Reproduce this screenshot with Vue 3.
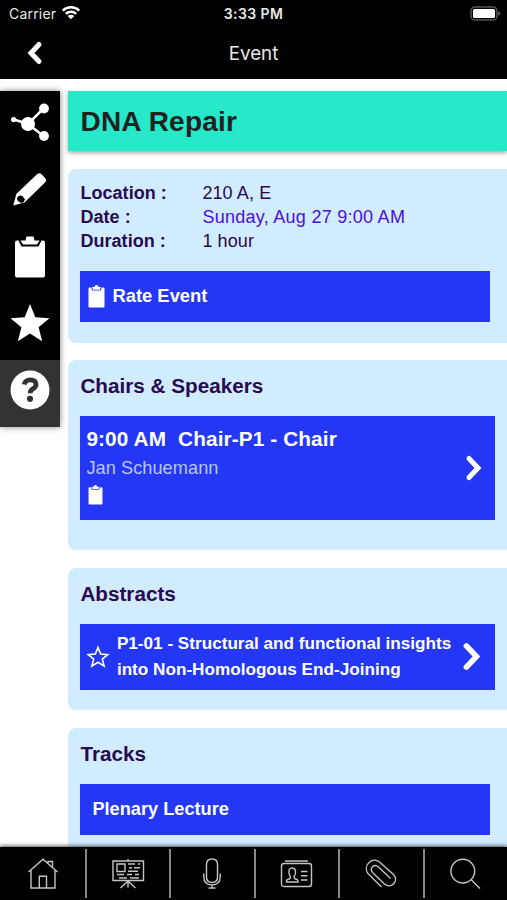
<template>
  <div class="app">
    <header class="header">
      <div class="status-bar">
        <div class="carrier">
          <span>Carrier</span>
          <svg class="wifi" viewBox="0 0 20 15">
            <path d="M1.800 5.600a11.700 11.700 0 0 1 16.400 0M4.800 8.800a7.400 7.400 0 0 1 10.400 0" />
            <path class="wifi-dot" d="M10 14.200 6.700 11a4.700 4.700 0 0 1 6.600 0z" />
          </svg>
        </div>
        <span class="time">3:33 PM</span>
        <svg class="battery" viewBox="0 0 32 16">
          <rect class="battery-case" x="1" y="1" width="26" height="13" rx="4" />
          <rect class="battery-level" x="3" y="3" width="22" height="9" rx="1.5" />
          <path class="battery-tip" d="M28.300 5.200q2 .8 2 2.300t-2 2.300z" />
        </svg>
      </div>
      <div class="nav-bar">
        <svg class="back" viewBox="0 0 16 24"><path d="M12 3.500 4 12l8 8.500" /></svg>
        <h1>Event</h1>
      </div>
    </header>

    <div class="body">
      <nav class="side-menu">
        <button class="side-btn share">
          <svg viewBox="0 0 40 40">
            <path class="link" d="M4 14.500 18 19 33.500 3.500M18 19l15.500 12" />
            <circle cx="3.600" cy="14.500" r="2.600" />
            <circle cx="18" cy="19" r="7" />
            <circle cx="34" cy="3.500" r="4.900" />
            <circle cx="34" cy="31" r="4.900" />
          </svg>
        </button>
        <button class="side-btn">
          <svg viewBox="0 0 40 40">
            <path d="M3.300 36.500 6.300 25 27 5.300q2.300-2.100 4.500 0l3.500 3.700q2.200 2.300 0 4.500L14.500 33.500z" />
            <path class="pencil-cut" d="M8 27.500q2.500-1.800 4.500-.3l2.500 3q-.5 3-3.500 3.800-4-1.500-4.700-4.500z" />
          </svg>
        </button>
        <button class="side-btn">
          <svg viewBox="0 0 40 40"><path :d="bigClipboard" /></svg>
        </button>
        <button class="side-btn">
          <svg viewBox="0 0 40 40"><path :d="star" /></svg>
        </button>
        <button class="side-btn active">
          <svg viewBox="0 0 40 40">
            <circle cx="20" cy="20" r="19.500" />
            <path class="question" d="M14.200 14.500q1-4.700 6-4.700 5.800 0 5.800 4.700 0 2.600-3.200 4.400-2.600 1.500-2.600 4.300" />
            <circle class="question-dot" cx="20" cy="28.800" r="3.100" />
          </svg>
        </button>
      </nav>

      <main class="content">
        <h2 class="title">DNA Repair</h2>

        <section class="card details">
          <dl>
            <template v-for="row in details" :key="row.label">
              <dt>{{ row.label }} :</dt>
              <dd :class="{ date: row.isDate }">{{ row.value }}</dd>
            </template>
          </dl>
          <button class="item rate">
            <svg class="clipboard" viewBox="0 0 17 23"><path :d="clipboard" /></svg>
            <span>Rate Event</span>
          </button>
        </section>

        <section class="card chairs">
          <h3>Chairs &amp; Speakers</h3>
          <div class="item speaker">
            <div class="speaker-info">
              <div class="role"><span>9:00 AM</span><span>Chair-P1 - Chair</span></div>
              <div class="name">Jan Schuemann</div>
              <svg class="clipboard small" viewBox="0 0 17 23"><path :d="clipboard" /></svg>
            </div>
            <svg class="chevron" viewBox="0 0 16 26"><path d="M3 3.500 12 13 3 22.500" /></svg>
          </div>
        </section>

        <section class="card abstracts">
          <h3>Abstracts</h3>
          <div class="item abstract">
            <svg class="star-outline" viewBox="0 0 40 40"><path :d="star" /></svg>
            <p>P1-01 - Structural and functional insights<br>into Non-Homologous End-Joining</p>
            <svg class="chevron large" viewBox="0 0 16 26"><path d="M3 3.500 12 13 3 22.500" /></svg>
          </div>
        </section>

        <section class="card tracks">
          <h3>Tracks</h3>
          <div class="item track">Plenary Lecture</div>
        </section>
      </main>
    </div>

    <footer class="tab-bar">
      <button v-for="tab in tabs" :key="tab.name" class="tab" :aria-label="tab.name">
        <svg viewBox="0 0 34 34"><path v-for="d in tab.paths" :key="d" :d="d" /></svg>
      </button>
    </footer>
  </div>
</template>

<script setup>
const details = [
  { label: 'Location', value: '210 A, E' },
  { label: 'Date', value: 'Sunday, Aug 27 9:00 AM', isDate: true },
  { label: 'Duration', value: '1 hour' }
]

const star = 'M20 1 25.300 14.200 39.500 15.200 28.600 24.300 32.200 38.200 20 30.600 7.800 38.200 11.400 24.300.5 15.200 14.700 14.200z'
const clipboard = 'M1.500 2.500H3l1.500 3h8L14 2.500h1.500q1 0 1 1v18q0 1-1 1h-14q-1 0-1-1v-18q0-1 1-1zM3.800 2h2.700q0-2 2-2t2 2h2.700l-1.500 2.700H5.300z'
const bigClipboard = 'M7 4.500h1.500l3 6h17l3-6H33q2 0 2 2v33q0 2-2 2H7q-2 0-2-2v-33q0-2 2-2zM10.500 4.500h5l1-4h7l1 4h5L27 8.500H13z'

const tabs = [
  { name: 'Home', paths: ['M2.500 17 17 4.300 31.500 17M5 15v18h24V15M22 8.700V6.500h4.500v6.300M13.300 33V21.300h7.200V33'] },
  {
    name: 'Program',
    paths: [
      'M2 6h30.500v19.500H2zM17 4v2M17 25.500v7M17 26 9.500 33M17 26 24.500 33',
      'M6 9h8v7.500H6zM17 9h7M27 9h2M18 12.800h3M23 12.800h6M17 16.300h10M6 19.500h7M16 19.500h5M24 19.500h4M8 23h8M19 23h9'
    ]
  },
  { name: 'Speakers', paths: ['M17 4q5.500 0 5.500 5.500v12.500q0 5.500-5.500 5.500t-5.500-5.500V9.500q0-5.500 5.500-5.500zM8.800 18.500v3q0 8.500 8.200 8.500t8.200-8.500v-3M17 30v3M13.500 33h7'] },
  {
    name: 'Attendees',
    paths: [
      'M4 8.500h25q2.500 0 2.500 2.500v18q0 2.500-2.500 2.500H4q-2.500 0-2.500-2.500V11q0-2.500 2.500-2.500zM5 6h23',
      'M12 13q4 0 3.500 5-.3 2.500-1.500 3.500 0 2 1.500 2.500 3 .5 2.500 3H6.500q-.5-2.500 2.500-3 1.500-.5 1.500-2.500-1.200-1-1.500-3.500-.5-5 3-5zM21 16.500h6.500M21 20.800h6.500M21 25h6.500'
    ]
  },
  { name: 'Resources', paths: ['M17.500 32 4 18.500C-1.500 11.500 7.500 1 15.500 7l14 12.500c6 6.500-2.500 15-9 9.500L9 18C4.500 13 10.500 8.500 14.500 12l12 11.500'] },
  { name: 'Search', paths: ['M13.800 4.200a11.900 11.900 0 1 1 0 23.800 11.900 11.900 0 0 1 0-23.800zM22 24.500 31 33.500'] }
]
</script>

<style>
body {
  margin: 0;
}
</style>

<style scoped>
.app {
  display: flex;
  flex-direction: column;
  width: 507px;
  height: 900px;
  overflow: hidden;
  background: #fff;
  font-family: "Liberation Sans", Arial, sans-serif;
}

button {
  padding: 0;
  border: none;
  font: inherit;
  color: inherit;
}

h1, h2, h3, p, dl, dd {
  margin: 0;
}

svg {
  display: block;
  flex: none;
  fill: #fff;
  overflow: visible;
}

.header {
  flex: none;
  box-sizing: border-box;
  height: 79px;
  background: #000;
  color: #e8e8e8;
  font-family: Inter, sans-serif;
}

.status-bar {
  display: grid;
  grid-template-columns: 1fr auto 1fr;
  align-items: center;
  height: 27px;
  padding: 0 5px 0 9px;
  font-size: 14px;
}

.carrier {
  display: flex;
  align-items: center;
  gap: 5px;
  letter-spacing: 0.2px;
}

.wifi {
  width: 20px;
  height: 15px;
  margin-top: -2px;
}

.wifi path {
  fill: none;
  stroke: #fff;
  stroke-width: 2.5;
}

.wifi .wifi-dot {
  fill: #fff;
  stroke: none;
}

.time {
  margin-right: 4px;
  font-weight: 600;
  letter-spacing: 0.4px;
}

.battery {
  justify-self: end;
  width: 32px;
  height: 16px;
}

.battery-case {
  fill: none;
  stroke: #555;
  stroke-width: 1.5;
}

.battery-tip {
  fill: #666;
}

.nav-bar {
  display: grid;
  grid-template-columns: 1fr auto 1fr;
  align-items: center;
  height: 52px;
}

.back {
  width: 16px;
  height: 24px;
  margin: -1px 0 0 27px;
}

.back path,
.chevron path {
  fill: none;
  stroke: #fff;
  stroke-width: 5;
  stroke-linecap: round;
}

.nav-bar h1 {
  padding-top: 1px;
  font-size: 18.800px;
  font-weight: 400;
}

.body {
  flex: 1;
  display: flex;
  align-items: flex-start;
  gap: 8px;
  min-height: 0;
  padding-top: 12px;
}

.side-menu {
  flex: none;
  width: 60px;
  background: #000;
  box-shadow: 0 0 6px rgba(0, 0, 0, 0.5);
}

.side-btn {
  box-sizing: border-box;
  display: flex;
  align-items: center;
  justify-content: center;
  width: 60px;
  height: 67.200px;
  padding-bottom: 6px;
  background: #000;
}

.side-btn.share {
  padding-bottom: 0;
}

.side-btn.active {
  background: #333;
}

.side-btn svg {
  width: 40px;
  height: 40px;
}

.link {
  fill: none;
  stroke: #fff;
  stroke-width: 2.5;
}

.side-btn .pencil-cut {
  fill: #000;
}

.question {
  fill: none;
  stroke: #333;
  stroke-width: 4.800;
}

.question-dot {
  fill: #333;
}

.content {
  flex: 1;
  min-width: 0;
}

.title {
  height: 60px;
  padding-left: 12.500px;
  background: #27e8c8;
  box-shadow: 0 2px 4px rgba(0, 0, 0, 0.35);
  color: #222;
  font-size: 28px;
  line-height: 62px;
  letter-spacing: 0.2px;
}

.card {
  box-sizing: border-box;
  margin-top: 17.500px;
  padding: 12px 12px 0 12.400px;
  background: #d2ecff;
  border-radius: 8px 0 0 8px;
  color: #29094f;
}

.details {
  height: 174px;
}

.chairs {
  height: 190px;
}

.abstracts {
  height: 142.500px;
}

.tracks {
  height: 160px;
}

dl {
  display: grid;
  grid-template-columns: 122px 1fr;
  font-size: 18px;
  line-height: 24.400px;
}

dt {
  font-weight: 700;
  letter-spacing: 0.05px;
}

dd {
  letter-spacing: 0.1px;
}

.date {
  color: #4b0fd8;
  letter-spacing: 0.27px;
}

h3 {
  padding-top: 2px;
  font-size: 20.700px;
  line-height: 24px;
}

.item {
  box-sizing: border-box;
  display: flex;
  align-items: center;
  background: #2337f5;
  color: #fff;
}

.rate {
  width: 410px;
  height: 51px;
  margin-top: 17px;
  padding-left: 8px;
  gap: 7px;
  font-size: 18.400px;
  font-weight: 700;
}

.clipboard {
  width: 17px;
  height: 23px;
}

.clipboard.small {
  width: 15px;
  height: 20px;
  margin: 4px 0 0 2px;
}

.speaker {
  width: 415px;
  height: 104px;
  margin-top: 18px;
  padding: 0 13px 0 6px;
  justify-content: space-between;
}

.speaker-info {
  height: 85px;
}

.role {
  display: flex;
  gap: 12px;
  font-size: 20.800px;
  font-weight: 700;
  line-height: 26px;
  letter-spacing: 0.1px;
}

.name {
  margin-top: 3px;
  color: #b9c6ff;
  font-size: 18.200px;
  line-height: 26px;
  letter-spacing: 0.05px;
}

.chevron {
  width: 16px;
  height: 26px;
}

.chevron.large {
  width: 18px;
  height: 29px;
}

.abstract {
  width: 415px;
  height: 66px;
  margin-top: 18px;
  padding: 0 14px 0 7.500px;
}

.star-outline {
  width: 20px;
  height: 20px;
}

.star-outline path {
  fill: none;
  stroke: #fff;
  stroke-width: 3.200;
}

.abstract p {
  flex: 1;
  margin-left: 9px;
  font-size: 17.150px;
  font-weight: 700;
  line-height: 25.500px;
  white-space: nowrap;
}

.track {
  width: 410px;
  height: 51px;
  margin-top: 18px;
  padding-left: 12px;
  font-size: 18.200px;
  font-weight: 700;
}

.tab-bar {
  z-index: 1;
  flex: none;
  display: grid;
  grid-template-columns: repeat(6, 1fr);
  height: 53px;
  background: #000;
  box-shadow: 0 -1px 4px rgba(0, 0, 0, 0.7);
}

.tab {
  box-sizing: border-box;
  display: flex;
  align-items: center;
  justify-content: center;
  height: 49px;
  margin-top: 2px;
  padding-bottom: 4px;
  background: #000;
  border-left: 2px solid #888;
}

.tab:first-child {
  border-left-color: #000;
}

.tab svg {
  width: 34px;
  height: 34px;
}

.tab path {
  fill: none;
  stroke: #c4c4c4;
  stroke-width: 1.400;
}
</style>
